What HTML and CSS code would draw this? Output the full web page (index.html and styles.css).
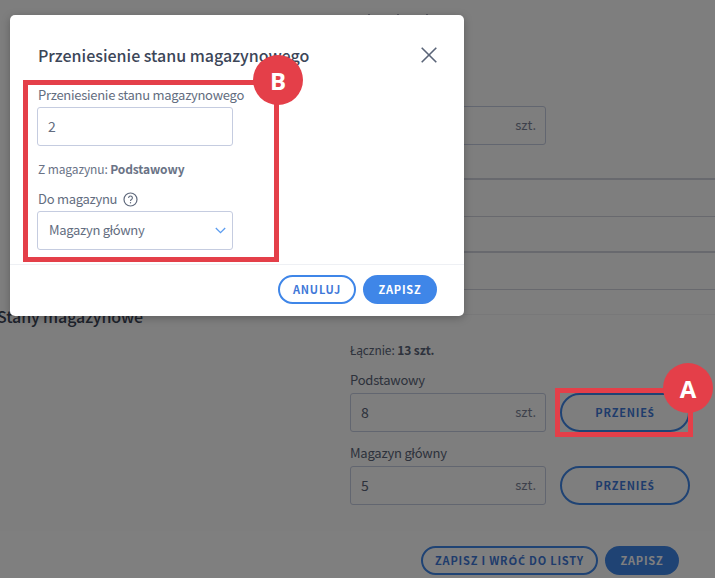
FILE: index.html
```html
<!DOCTYPE html>
<html lang="pl">
<head>
<meta charset="utf-8">
<title>Przeniesienie stanu magazynowego</title>
<link rel="stylesheet" href="styles.css">
</head>
<body>
<div class="page">
  <main class="form">
    <div class="ticks"><i></i><i></i><i></i></div>
    <div class="stock-input top-input"><span>&nbsp;</span><span class="unit">szt.</span></div>
    <div class="rules">
      <div class="rule r1 thick"></div>
      <div class="rule r2"></div>
      <div class="rule r3 thick"></div>
      <div class="rule r4"></div>
    </div>
    <section class="stock-section">
      <h2 class="section-title">Stany magazynowe</h2>
      <div class="stock-col">
        <p class="total">Łącznie: <b>13 szt.</b></p>
        <div class="stock-item">
          <label class="stock-label">Podstawowy</label>
          <div class="stock-row">
            <div class="stock-input"><span>8</span><span class="unit">szt.</span></div>
            <button class="btn btn-outline btn-move">PRZENIE<span class="acc">Ś</span></button>
          </div>
        </div>
        <div class="stock-item">
          <label class="stock-label">Magazyn główny</label>
          <div class="stock-row">
            <div class="stock-input"><span>5</span><span class="unit">szt.</span></div>
            <button class="btn btn-outline btn-move">PRZENIE<span class="acc">Ś</span></button>
          </div>
        </div>
      </div>
    </section>
  </main>
  <footer class="savebar">
    <button class="btn btn-outline btn-back">ZAPISZ I WR<span class="acc">ÓĆ</span> DO LISTY</button>
    <button class="btn btn-fill btn-save">ZAPISZ</button>
  </footer>
</div>

<div class="overlay"></div>

<div class="modal">
  <header class="modal-head">
    <h1 class="modal-title">Przeniesienie stanu magazynowego</h1>
    <svg class="close" width="16" height="16" viewBox="0 0 16 16"><path d="M.7.7 15.300 15.300M15.300.7.7 15.300" fill="none" stroke="#5a6478" stroke-width="1.600"/></svg>
  </header>
  <div class="modal-body">
    <label class="field-label">Przeniesienie stanu magazynowego</label>
    <div class="field">2</div>
    <p class="from">Z magazynu: <b>Podstawowy</b></p>
    <label class="field-label with-help">Do magazynu
      <svg class="help" width="15" height="15" viewBox="0 0 15 15"><circle cx="7.500" cy="7.500" r="6.500" fill="none" stroke="#5f697c" stroke-width="1.200"/><path d="M5.600 5.900a1.900 1.900 0 1 1 2.900 1.600c-.7.400-1 .8-1 1.500" fill="none" stroke="#5f697c" stroke-width="1.100"/><circle cx="7.500" cy="10.800" r=".7" fill="#5f697c"/></svg>
    </label>
    <div class="field select">Magazyn główny
      <svg class="chev" width="11" height="7" viewBox="0 0 11 7"><path d="M.8 1 5.500 5.700 10.200 1" fill="none" stroke="#5b9cf0" stroke-width="1.300"/></svg>
    </div>
  </div>
  <footer class="modal-foot">
    <button class="btn btn-outline-light btn-cancel">ANULUJ</button>
    <button class="btn btn-primary btn-ok">ZAPISZ</button>
  </footer>
</div>

<div class="mark mark-a"></div>
<div class="badge badge-a">A</div>
<div class="mark mark-b"></div>
<div class="badge badge-b">B</div>
</body>
</html>
```
FILE: styles.css
```css
* { box-sizing: border-box; }
html, body { margin: 0; padding: 0; }
body {
  width: 715px;
  height: 578px;
  overflow: hidden;
  position: relative;
  font-family: "Noto Sans CJK JP", "Noto Sans", sans-serif;
  color: #5a6478;
}
button { font-family: inherit; cursor: pointer; padding: 0 0 2px; }
h1, h2, p { margin: 0; }

.page { height: 578px; display: flex; flex-direction: column; background: #fcfcfc; }
.form { flex: 1; padding-top: 14px; }
.ticks { display: flex; gap: 27px; height: 1px; margin: 0 0 91px 368px; }
.ticks i { width: 2px; height: 1px; background: #a8acbc; }

.stock-input {
  width: 196px;
  height: 39px;
  margin-left: 350px;
  border: 1px solid #c5cce0;
  border-radius: 3px;
  background: #fcfcfc;
  padding: 0 9px 2px 10px;
  display: flex;
  align-items: center;
  justify-content: space-between;
  font-size: 14px;
  color: #5a6478;
}
.stock-row .stock-input { margin-left: 0; }
.unit { font-size: 13px; color: #7a8396; }

.rules { margin-left: 350px; }
.rule { border-bottom: 1px solid #d0d2dc; }
.rule.thick { border-bottom-width: 2px; }
.r1 { height: 35px; }
.r2 { height: 37px; }
.r3 { height: 36px; }
.r4 { height: 37px; }

.stock-section { border-top: 1px solid #f0f0f3; margin-top: 24px; position: relative; }
.section-title {
  font-size: 16px;
  font-weight: 500;
  line-height: 22px;
  letter-spacing: -.1px;
  color: #3c4658;
  margin-left: -3px;
  margin-top: -10px;
}
.stock-col { padding: 15px 0 0 350px; }
.total { font-size: 12px; line-height: 16px; letter-spacing: -.1px; color: #5a6478; }
.total b { font-weight: 700; }
.stock-item { margin-top: 13px; }
.stock-item + .stock-item { margin-top: 12px; }
.stock-label { display: block; font-size: 13px; line-height: 18px; letter-spacing: -.2px; margin-bottom: 4px; color: #5a6478; }
.stock-row { display: flex; gap: 14px; }

.btn { border-radius: 999px; font-weight: 700; font-size: 11px; letter-spacing: .8px; }
.acc { font-family: "Noto Sans", sans-serif; }
.btn-outline { background: transparent; border: 2px solid #3f86e8; color: #3f78d8; }
.btn-move { width: 130px; height: 39px; }
.btn-fill { background: #3f86e8; border: 0; color: #fff; }

.savebar {
  height: 47px;
  background: #fff;
  display: flex;
  justify-content: flex-end;
  align-items: flex-start;
  gap: 7px;
  padding: 15px 36px 0 0;
}
.btn-back { width: 177px; height: 29px; }
.btn-save { width: 74px; height: 29px; }

.overlay { position: absolute; inset: 0; background: rgba(0, 0, 0, .5); }

.modal {
  position: absolute;
  left: 10px;
  top: 15px;
  width: 454px;
  height: 301px;
  background: #fff;
  border-radius: 5px;
  box-shadow: 0 2px 8px rgba(0, 0, 0, .25);
  display: flex;
  flex-direction: column;
}
.modal-head {
  height: 71px;
  padding: 28px 27px 0 28px;
  display: flex;
  justify-content: space-between;
  align-items: flex-start;
}
.modal-title { font-size: 16px; font-weight: 500; line-height: 24px; color: #3c4658; }
.close { margin-top: 4px; }
.modal-body { flex: 1; padding: 0 0 0 27px; }
.field-label { display: block; font-size: 13px; line-height: 18px; letter-spacing: -.28px; color: #636d80; margin-left: 1px; }
.with-help { display: flex; align-items: center; gap: 6px; }
.field {
  width: 196px;
  height: 39px;
  margin-top: 3px;
  border: 1px solid #c5cce0;
  border-radius: 3px;
  display: flex;
  align-items: center;
  padding: 0 10px 2px;
  font-size: 14px;
  color: #636d80;
  position: relative;
}
.select { justify-content: space-between; padding: 0 6px 2px 11px; font-size: 13px; letter-spacing: -.3px; }
.chev { margin-top: 2px; }
.from { font-size: 12px; line-height: 16px; letter-spacing: -.12px; margin: 15px 0 13px 1px; color: #6a7386; }
.from b { font-weight: 700; }
.modal-foot {
  height: 52px;
  border-top: 1px solid #eef0f4;
  display: flex;
  justify-content: flex-end;
  gap: 7px;
  padding: 10px 27px 0 0;
}
.btn-cancel { width: 78px; height: 29px; background: #fff; border: 2px solid #3f86e8; color: #3f78d8; }
.btn-ok { width: 74px; height: 29px; background: #3f86e8; border: 0; color: #fff; }

.mark { position: absolute; border: 5px solid #e43f49; }
.mark-a { left: 555px; top: 388px; width: 138px; height: 49px; }
.mark-b { left: 23px; top: 80px; width: 256px; height: 182px; }
.badge {
  position: absolute;
  width: 50px;
  height: 50px;
  border-radius: 50%;
  background: #e43f49;
  color: #fff;
  font-family: "Open Sans", sans-serif;
  font-weight: 700;
  font-size: 24px;
  display: flex;
  align-items: center;
  justify-content: center;
}
.badge-a { left: 663px; top: 363px; }
.badge-b { left: 253px; top: 55px; }
```
